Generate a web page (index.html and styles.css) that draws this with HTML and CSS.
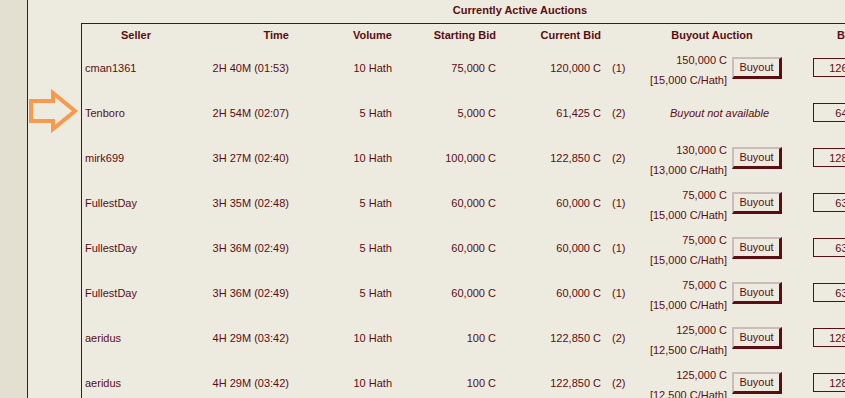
FILE: index.html
```html
<!DOCTYPE html>
<html>
<head>
<meta charset="utf-8">
<link rel="stylesheet" href="styles.css">
</head>
<body>
<div class="layout">
  <aside class="sidebar"></aside>
  <main class="content">
    <h2 class="title">Currently Active Auctions</h2>
    <div class="auction-box">
      <table class="auctions">
        <colgroup>
          <col class="c-seller"><col class="c-time"><col class="c-volume"><col class="c-start"><col class="c-current"><col class="c-count"><col class="c-buyout"><col class="c-bid">
        </colgroup>
        <thead>
          <tr>
            <th class="center">Seller</th>
            <th class="right">Time</th>
            <th class="right">Volume</th>
            <th class="right">Starting Bid</th>
            <th class="right">Current Bid</th>
            <th></th>
            <th class="center">Buyout Auction</th>
            <th class="center bid-head">Bid Amount</th>
          </tr>
        </thead>
        <tbody>
          <tr>
            <td class="seller">cman1361</td><td class="right">2H 40M (01:53)</td><td class="right">10 Hath</td><td class="right">75,000 C</td><td class="right">120,000 C</td><td class="count">(1)</td>
            <td><div class="buyout"><div class="price"><div>150,000 C</div><div>[15,000 C/Hath]</div></div><button class="btn">Buyout</button></div></td>
            <td class="bid"><input class="bid-input" value="126,000"></td>
          </tr>
          <tr>
            <td class="seller">Tenboro</td><td class="right">2H 54M (02:07)</td><td class="right">5 Hath</td><td class="right">5,000 C</td><td class="right">61,425 C</td><td class="count">(2)</td>
            <td class="na">Buyout not available</td>
            <td class="bid"><input class="bid-input" value="64,497"></td>
          </tr>
          <tr>
            <td class="seller">mirk699</td><td class="right">3H 27M (02:40)</td><td class="right">10 Hath</td><td class="right">100,000 C</td><td class="right">122,850 C</td><td class="count">(2)</td>
            <td><div class="buyout"><div class="price"><div>130,000 C</div><div>[13,000 C/Hath]</div></div><button class="btn">Buyout</button></div></td>
            <td class="bid"><input class="bid-input" value="128,993"></td>
          </tr>
          <tr>
            <td class="seller">FullestDay</td><td class="right">3H 35M (02:48)</td><td class="right">5 Hath</td><td class="right">60,000 C</td><td class="right">60,000 C</td><td class="count">(1)</td>
            <td><div class="buyout"><div class="price"><div>75,000 C</div><div>[15,000 C/Hath]</div></div><button class="btn">Buyout</button></div></td>
            <td class="bid"><input class="bid-input" value="63,000"></td>
          </tr>
          <tr>
            <td class="seller">FullestDay</td><td class="right">3H 36M (02:49)</td><td class="right">5 Hath</td><td class="right">60,000 C</td><td class="right">60,000 C</td><td class="count">(1)</td>
            <td><div class="buyout"><div class="price"><div>75,000 C</div><div>[15,000 C/Hath]</div></div><button class="btn">Buyout</button></div></td>
            <td class="bid"><input class="bid-input" value="63,000"></td>
          </tr>
          <tr>
            <td class="seller">FullestDay</td><td class="right">3H 36M (02:49)</td><td class="right">5 Hath</td><td class="right">60,000 C</td><td class="right">60,000 C</td><td class="count">(1)</td>
            <td><div class="buyout"><div class="price"><div>75,000 C</div><div>[15,000 C/Hath]</div></div><button class="btn">Buyout</button></div></td>
            <td class="bid"><input class="bid-input" value="63,000"></td>
          </tr>
          <tr>
            <td class="seller">aeridus</td><td class="right">4H 29M (03:42)</td><td class="right">10 Hath</td><td class="right">100 C</td><td class="right">122,850 C</td><td class="count">(2)</td>
            <td><div class="buyout"><div class="price"><div>125,000 C</div><div>[12,500 C/Hath]</div></div><button class="btn">Buyout</button></div></td>
            <td class="bid"><input class="bid-input" value="128,993"></td>
          </tr>
          <tr>
            <td class="seller">aeridus</td><td class="right">4H 29M (03:42)</td><td class="right">10 Hath</td><td class="right">100 C</td><td class="right">122,850 C</td><td class="count">(2)</td>
            <td><div class="buyout"><div class="price"><div>125,000 C</div><div>[12,500 C/Hath]</div></div><button class="btn">Buyout</button></div></td>
            <td class="bid"><input class="bid-input" value="128,993"></td>
          </tr>
        </tbody>
      </table>
    </div>
    <svg class="arrow" width="52" height="46" viewBox="0 0 52 46">
      <polygon points="3,13 25,13 25,5 47,23 25,41 25,33 3,33" fill="none" stroke="#F79A4E" stroke-width="4" stroke-linejoin="miter"/>
    </svg>
  </main>
</div>
</body>
</html>
```

FILE: styles.css
```css
html, body {
  margin: 0;
  padding: 0;
  overflow: hidden;
  background: #EDEADF;
}

body {
  font-family: "Liberation Sans", Arial, sans-serif;
  font-size: 11px;
  color: #5C0D11;
}

.layout {
  display: flex;
  height: 398px;
}

.sidebar {
  width: 27px;
  flex: 0 0 27px;
  background: #E3E0D1;
  border-right: 1px solid #5C0D11;
}

.content {
  position: relative;
  flex: 1;
  min-width: 0;
  padding-left: 53px;
}

.title {
  width: 878px;
  margin: 0;
  height: 23px;
  line-height: 21px;
  font-size: 11px;
  font-weight: bold;
  text-align: center;
}

.auction-box {
  width: 876px;
  border-left: 1px solid #5C0D11;
  border-top: 1px solid #5C0D11;
  border-right: 1px solid #5C0D11;
  height: 400px;
}

.auctions {
  border-collapse: collapse;
  table-layout: fixed;
  width: 876px;
}

.c-seller { width: 108px; }
.c-time { width: 102px; }
.c-volume { width: 103px; }
.c-start { width: 104px; }
.c-current { width: 105px; }
.c-count { width: 30px; }
.c-buyout { width: 156px; }
.c-bid { width: 168px; }

.auctions th {
  height: 21px;
  padding: 0 3px;
  font-weight: bold;
  vertical-align: middle;
}

.auctions td {
  height: 45px;
  padding: 0 3px;
  vertical-align: middle;
  white-space: nowrap;
}

.center { text-align: center; }
.right { text-align: right; }

.auctions th.bid-head {
  padding-right: 15px;
}

.auctions td.seller {
  text-align: left;
}

.auctions td.count {
  padding-left: 8px;
  text-align: left;
}

.buyout {
  display: flex;
  justify-content: flex-end;
  align-items: center;
  gap: 5px;
  padding-right: 5px;
}

.price {
  text-align: right;
  line-height: 20px;
  padding-top: 4px;
}

.btn {
  font-family: "Liberation Sans", Arial, sans-serif;
  font-size: 11px;
  color: #5C0D11;
  background: #EDEADF;
  width: 50px;
  height: 22px;
  padding: 0;
  border-style: solid;
  border-width: 2px 3px 3px 2px;
  border-color: #CDBABA #5C0D11 #5C0D11 #CDBABA;
}

.auctions td.na {
  padding-left: 18px;
  text-align: center;
  font-style: italic;
}

.auctions td.bid {
  padding-left: 23px;
}

.bid-input {
  box-sizing: border-box;
  width: 60px;
  height: 19px;
  margin: 0;
  padding: 0 3px;
  border: 1px solid #5C0D11;
  background: #EDEADF;
  color: #5C0D11;
  font-family: "Liberation Sans", Arial, sans-serif;
  font-size: 11px;
  text-align: right;
}

.arrow {
  position: absolute;
  left: 0;
  top: 88px;
}
```
